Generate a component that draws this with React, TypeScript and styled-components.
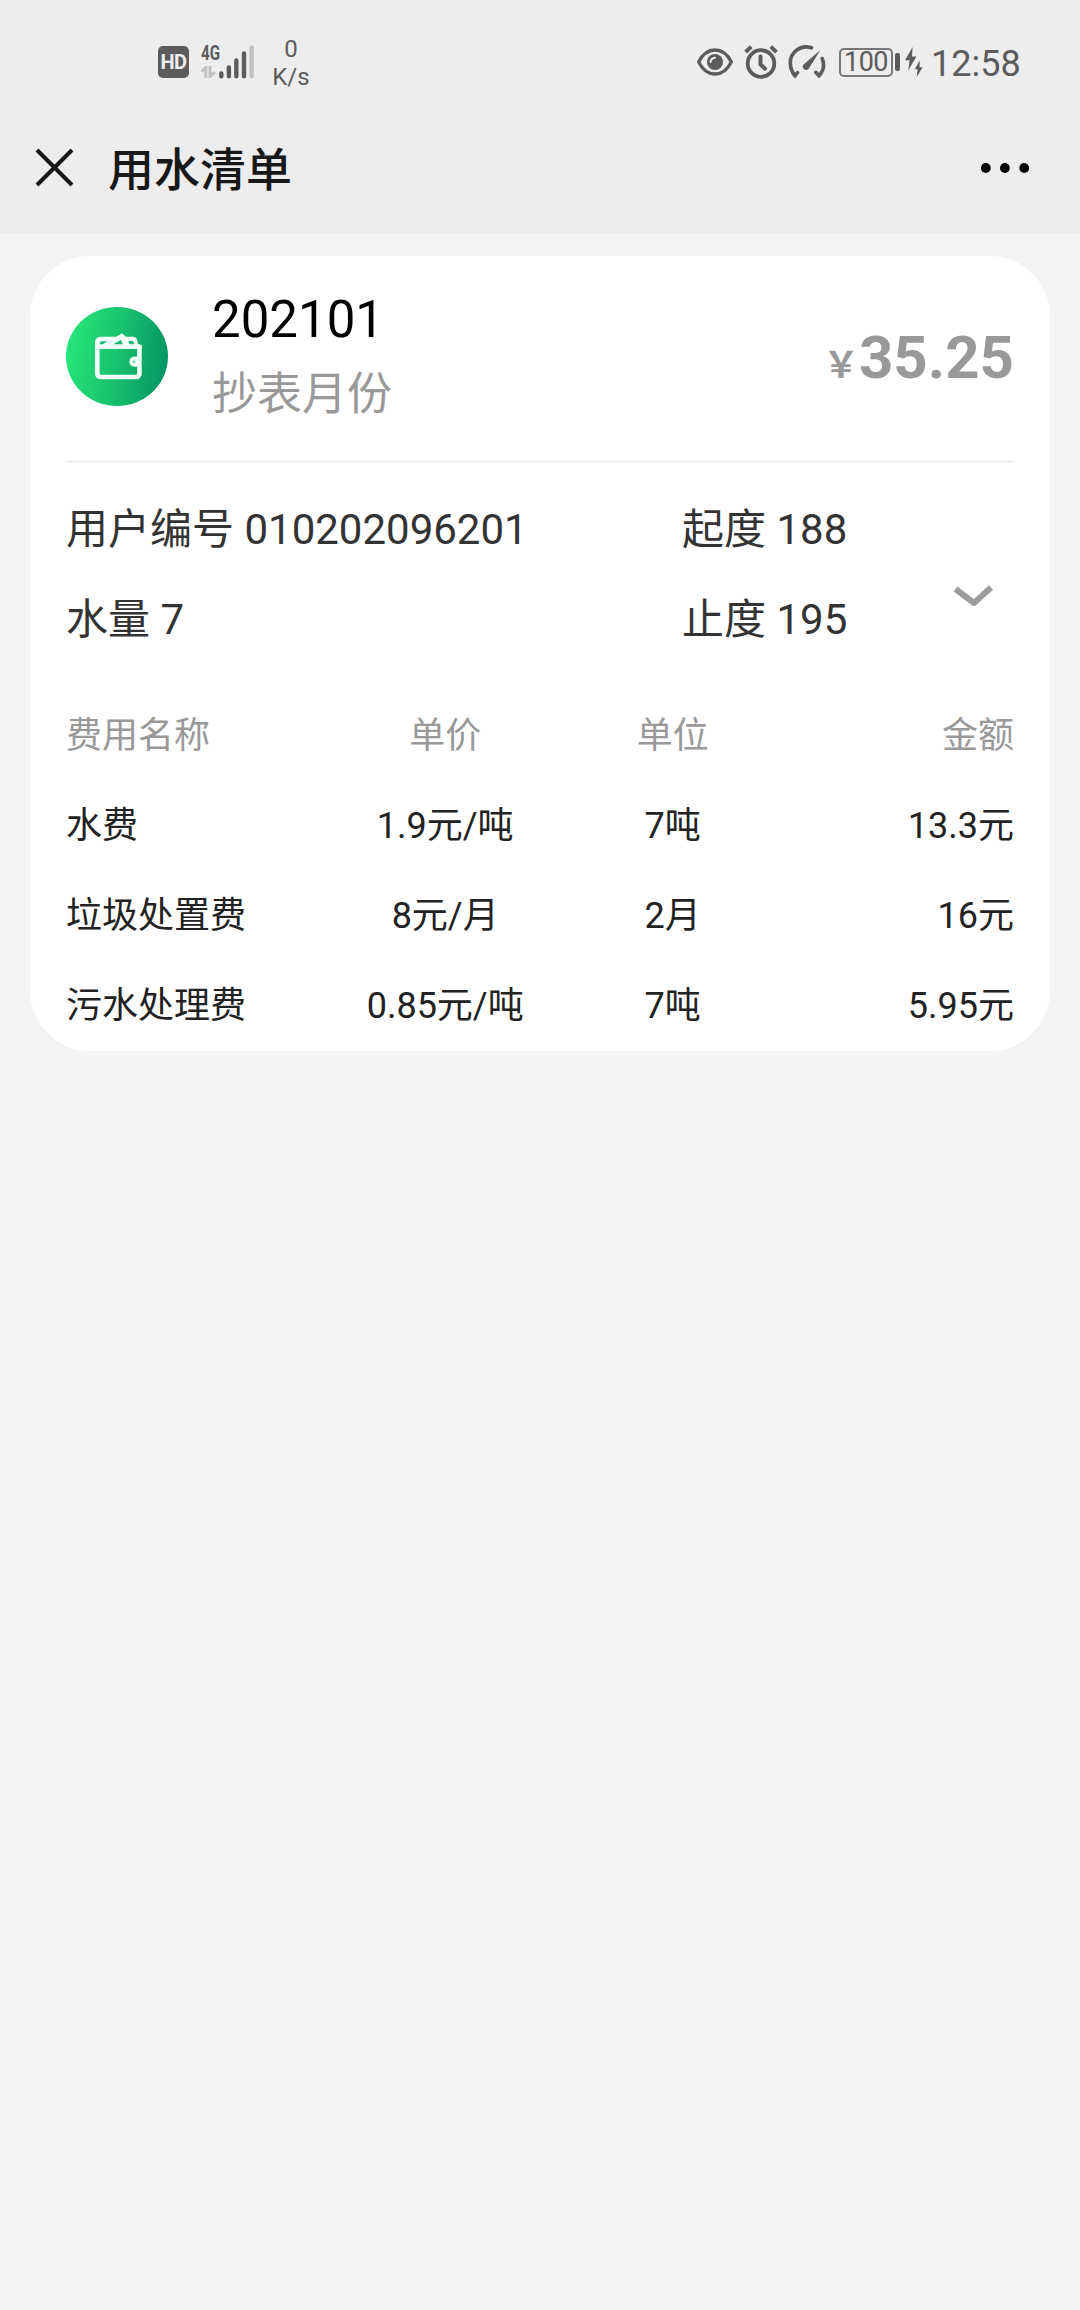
import React from "react";
import styled, { createGlobalStyle } from "styled-components";

const ink = "#5c5c5c";

const GlobalStyle = createGlobalStyle`
  * { box-sizing: border-box; }
  body {
    margin: 0;
    background: #f3f3f3;
    font-family: Roboto, "Noto Sans CJK SC", sans-serif;
  }
  svg { display: block; flex: none; }
`;

const Page = styled.div`
  width: 1080px;
  min-height: 2310px;
  background: #f3f3f3;
`;

const TopArea = styled.header`
  height: 233px;
  background: #ededed;
`;

const StatusBar = styled.div`
  height: 100px;
  padding: 24px 62px 0 158px;
  display: flex;
  align-items: center;
  justify-content: space-between;
  color: ${ink};
`;

const StatusGroup = styled.div`
  display: flex;
  align-items: center;
`;

const HdBadge = styled.span`
  width: 31px;
  height: 32px;
  border-radius: 5px;
  background: ${ink};
  color: #ededed;
  font-size: 20px;
  font-weight: 700;
  line-height: 32px;
  text-align: center;
  letter-spacing: -0.5px;
`;

const Signal = styled.div`
  display: grid;
  grid-template-columns: 18px 36px;
  margin-left: 12px;
  height: 34px;
`;

const Network = styled.div`
  display: flex;
  flex-direction: column;
  justify-content: space-between;
  height: 33px;
`;

const NetworkName = styled.span`
  height: 17px;
  font-size: 21px;
  line-height: 17px;
  font-weight: 700;
  transform: scaleX(0.72);
  transform-origin: left center;
  white-space: nowrap;
`;

const Speed = styled.div`
  width: 44px;
  margin: 1px 0 0 14px;
  font-size: 24px;
  line-height: 28px;
  text-align: center;
`;

const Battery = styled.div`
  display: flex;
  align-items: center;
  gap: 2px;
  margin-left: 13px;
`;

const BatteryBody = styled.span`
  width: 54px;
  height: 29px;
  border: 2px solid #777;
  border-radius: 5px;
  font-size: 27px;
  line-height: 25px;
  text-align: center;
  letter-spacing: -0.5px;
`;

const BatteryTip = styled.span`
  width: 5px;
  height: 18px;
  border-radius: 2px;
  background: ${ink};
`;

const Clock = styled.span`
  width: 87px;
  margin: 3px 0 0 8px;
  font-size: 36px;
  line-height: 40px;
  white-space: nowrap;
`;

const Gap = styled.span<{ $w: number }>`
  width: ${(p) => p.$w}px;
`;

const NavBar = styled.div`
  height: 133px;
  padding: 2px 51px 0 35px;
  display: flex;
  align-items: center;
`;

const Title = styled.h1`
  flex: 1;
  margin: 4px 0 0 34px;
  font-size: 46px;
  line-height: 60px;
  font-weight: 500;
  color: #181818;
`;

const Card = styled.main`
  margin: 23px 30px 0;
  height: 795px;
  padding: 0 36px;
  border-radius: 60px;
  background: #fff;
`;

const Summary = styled.section`
  display: flex;
  align-items: center;
  height: 207px;
  padding-bottom: 4px;
  border-bottom: 3px solid #f3f3f3;
`;

const Period = styled.div`
  flex: 1;
  margin: 4px 0 0 44px;
`;

const Month = styled.div`
  font-size: 51px;
  line-height: 72px;
  color: #000;
`;

const MonthLabel = styled.div`
  font-size: 45px;
  line-height: 77px;
  color: #999;
`;

const Total = styled.div`
  margin-top: 12px;
  font-size: 60px;
  line-height: 72px;
  font-weight: 700;
  color: #999;
`;

const Currency = styled.span`
  font-size: 36px;
  font-weight: 700;
`;

const Info = styled.section`
  display: flex;
  padding: 22px 0 26px;
  font-size: 42px;
  line-height: 90px;
  color: #333;
`;

const InfoColumn = styled.div<{ $w: number }>`
  width: ${(p) => p.$w}px;
`;

const Toggle = styled.div`
  padding: 100px 0 0 24px;
`;

const FeeRow = styled.div<{ $head?: boolean }>`
  display: grid;
  grid-template-columns: 28% 24% 24% 24%;
  height: 90px;
  font-size: 36px;
  line-height: 90px;
  color: ${(p) => (p.$head ? "#999" : "#222")};
`;

const Cell = styled.span<{ $align?: string }>`
  text-align: ${(p) => p.$align ?? "left"};
  white-space: nowrap;
`;

const DataArrows = () => (
  <svg width="15" height="12" viewBox="0 0 15 12" fill="none" stroke="#c2c2c2" strokeWidth="3">
    <path d="M0.5 5.5L4.8 1.5V12M9 0V10.5L14 6" />
  </svg>
);

const SignalBars = () => (
  <svg width="36" height="34" viewBox="0 0 36 34" strokeWidth="4.4" strokeLinecap="round" stroke={ink}>
    <path d="M2.3 28.5V31.3M9.9 22.5V31.3M17.3 15.5V31.3M25 8.5V31.3" />
    <path d="M32.7 2.5V31.3" stroke="#c2c2c2" />
  </svg>
);

const EyeIcon = () => (
  <svg width="36" height="28" viewBox="0 0 36 28" fill="none">
    <path d="M1.7 14C9.5-2 26.5-2 34.3 14C26.5 30 9.5 30 1.7 14Z" stroke={ink} strokeWidth="3.3" strokeLinejoin="round" />
    <circle cx="18" cy="14" r="8" fill={ink} />
    <path d="M13.6 14C13.8 11.2 15.4 9.8 18 9.7" stroke="#ededed" strokeWidth="2" strokeLinecap="round" />
  </svg>
);

const AlarmIcon = () => (
  <svg width="34" height="34" viewBox="0 0 34 34" fill="none" stroke={ink}>
    <circle cx="17" cy="18.5" r="13.3" strokeWidth="3.8" />
    <path d="M16.5 11.5V19.3L21 23.7" strokeWidth="4" strokeLinecap="round" />
    <path d="M1.6 7.2L7.2 1.6M26.8 1.6L32.4 7.2" strokeWidth="4" />
  </svg>
);

const GaugeIcon = () => (
  <svg width="38" height="34" viewBox="0 0 38 34" fill="none" stroke={ink} strokeWidth="3.6" strokeLinecap="round">
    <path d="M23.5 2.8C12.5-0.8 2.3 7 2.3 18C2.3 23.5 4.3 27.5 7 30.7L9.5 27.7" />
    <path d="M7 30.7L4.9 28" />
    <path d="M34.2 13.5C37 20.5 35 26.5 31 30.7L27.8 27.3" />
    <path d="M32.4 5L15.6 19.6C12.8 22.6 17.4 27.2 20.6 24Z" fill={ink} stroke="none" />
  </svg>
);

const ChargeIcon = () => (
  <svg width="18" height="30" viewBox="0 0 18 30" fill={ink}>
    <path d="M7.6 0L0 13.2H4.6L3.2 23.5L11.4 9.5H7Z" />
    <path d="M14.6 13.5L9.8 22.2H12.6L11.8 30L17.6 20.2H14.6Z" />
  </svg>
);

const CloseIcon = () => (
  <svg width="39" height="39" viewBox="0 0 39 39" stroke="#181818" strokeWidth="4">
    <path d="M2 2L37 37M37 2L2 37" />
  </svg>
);

const MoreIcon = () => (
  <svg width="48" height="10" viewBox="0 0 48 10" fill="#000">
    <circle cx="4.8" cy="5" r="4.9" />
    <circle cx="23.9" cy="5" r="4.9" />
    <circle cx="43.2" cy="5" r="4.9" />
  </svg>
);

const WalletIcon = () => (
  <svg width="102" height="99" viewBox="0 0 102 99" fill="none">
    <defs>
      <linearGradient id="walletFill" x1="0" y1="0.42" x2="1" y2="0.58">
        <stop offset="0" stopColor="#26e67a" />
        <stop offset="0.5" stopColor="#18c26d" />
        <stop offset="1" stopColor="#069565" />
      </linearGradient>
    </defs>
    <ellipse cx="51" cy="49.5" rx="51" ry="49.5" fill="url(#walletFill)" />
    <path
      d="M29 36C29 32 31 29.7 34.5 29.7H50L56 26.2L60 29.7H67C70.5 29.7 71.5 32.5 72 37L75.7 38V42H29Z"
      fill="#f0fff7"
    />
    <path
      d="M31.3 37V66.5C31.3 69 32.5 70 35 70H69.5C72 70 73.4 69 73.4 66.5V39.5"
      stroke="#f0fff7"
      strokeWidth="4.6"
      strokeLinejoin="round"
    />
    <path d="M73.5 49.5H68.5C61.8 49.5 61.8 59.8 68.5 59.8H73.5Z" fill="#f0fff7" />
    <path d="M33.6 37.2L34.4 34.4L41.5 34L37 37.2ZM47 37.2L55 33L56.6 37.2ZM63.5 37.2L62.3 34H67L68.4 37.2Z" fill="#1cb970" />
    <circle cx="68" cy="54.7" r="1.5" fill="#7fd9ae" />
  </svg>
);

const ChevronIcon = () => (
  <svg width="40" height="24" viewBox="0 0 40 24" fill="none" stroke="#9c9c9c" strokeWidth="6">
    <path d="M1.5 4L20 18L37 2.5" strokeLinejoin="round" />
  </svg>
);

const fees = [
  ["水费", "1.9元/吨", "7吨", "13.3元"],
  ["垃圾处置费", "8元/月", "2月", "16元"],
  ["污水处理费", "0.85元/吨", "7吨", "5.95元"],
];

const Row = ({ cells, head }: { cells: string[]; head?: boolean }) => (
  <FeeRow $head={head}>
    <Cell>{cells[0]}</Cell>
    <Cell $align="center">{cells[1]}</Cell>
    <Cell $align="center">{cells[2]}</Cell>
    <Cell $align="right">{cells[3]}</Cell>
  </FeeRow>
);

export default function App() {
  return (
    <Page>
      <GlobalStyle />
      <TopArea>
        <StatusBar>
          <StatusGroup>
            <HdBadge>HD</HdBadge>
            <Signal>
              <Network>
                <NetworkName>4G</NetworkName>
                <DataArrows />
              </Network>
              <SignalBars />
            </Signal>
            <Speed>
              <div>0</div>
              <div>K/s</div>
            </Speed>
          </StatusGroup>
          <StatusGroup>
            <EyeIcon />
            <Gap $w={11} />
            <AlarmIcon />
            <Gap $w={10} />
            <GaugeIcon />
            <Battery>
              <BatteryBody>100</BatteryBody>
              <BatteryTip />
            </Battery>
            <Gap $w={5} />
            <ChargeIcon />
            <Clock>12:58</Clock>
          </StatusGroup>
        </StatusBar>
        <NavBar>
          <CloseIcon />
          <Title>用水清单</Title>
          <MoreIcon />
        </NavBar>
      </TopArea>
      <Card>
        <Summary>
          <WalletIcon />
          <Period>
            <Month>202101</Month>
            <MonthLabel>抄表月份</MonthLabel>
          </Period>
          <Total>
            <Currency>￥</Currency>35.25
          </Total>
        </Summary>
        <Info>
          <InfoColumn $w={616}>
            <div>用户编号 010202096201</div>
            <div>水量 7</div>
          </InfoColumn>
          <InfoColumn $w={248}>
            <div>起度 188</div>
            <div>止度 195</div>
          </InfoColumn>
          <Toggle>
            <ChevronIcon />
          </Toggle>
        </Info>
        <Row head cells={["费用名称", "单价", "单位", "金额"]} />
        {fees.map((cells) => (
          <Row key={cells[0]} cells={cells} />
        ))}
      </Card>
    </Page>
  );
}
